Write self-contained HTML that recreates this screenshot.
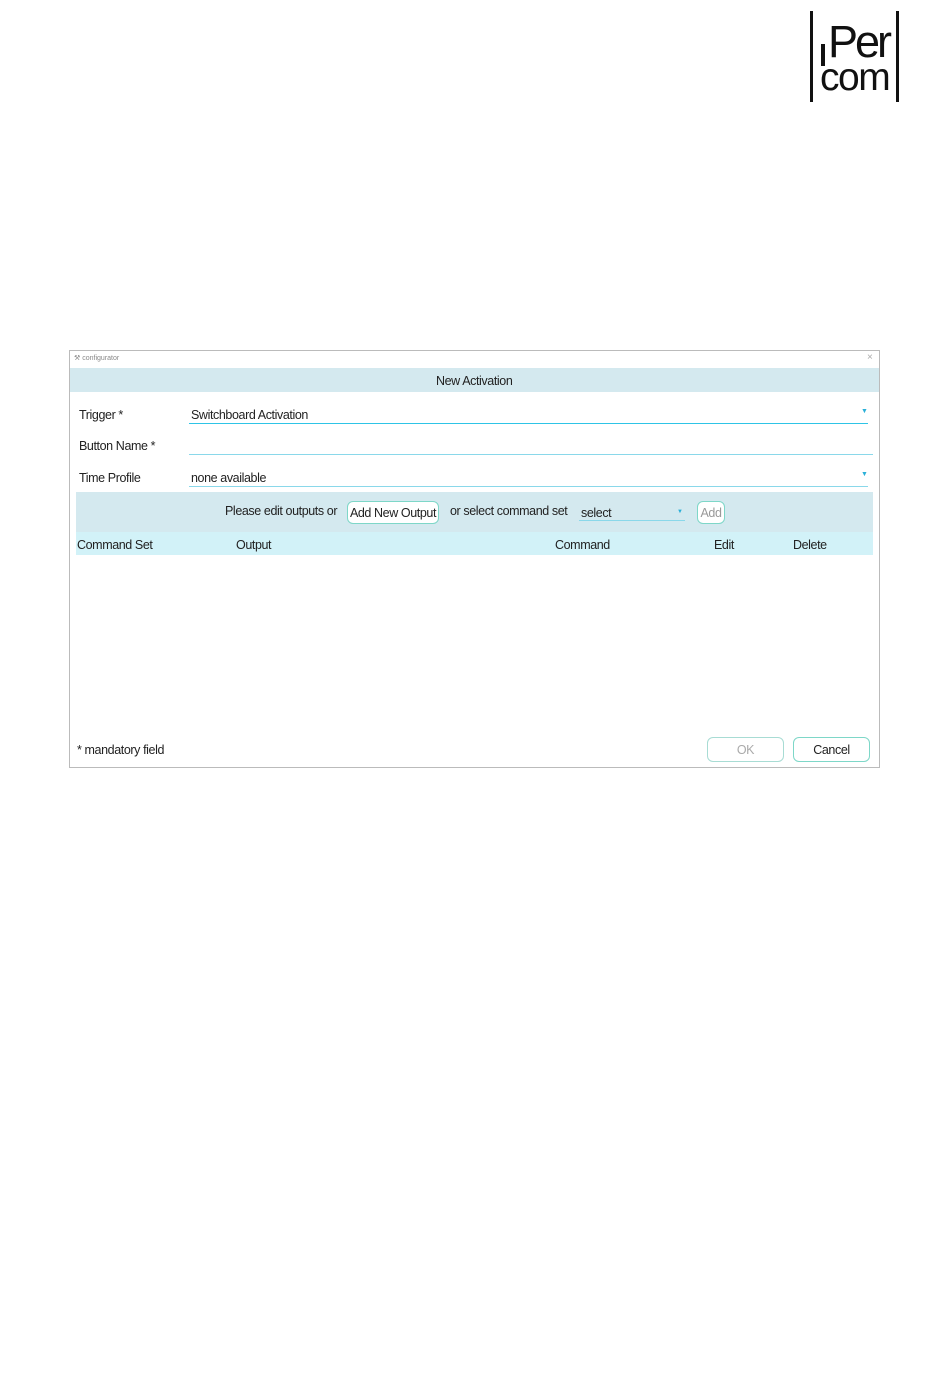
<!DOCTYPE html>
<html><head><style>
body{margin:0;width:950px;height:1397px;background:#fff;position:relative;font-family:"Liberation Sans",sans-serif;overflow:hidden}
.a{position:absolute;white-space:nowrap}
.t{font-size:12.5px;color:#222;letter-spacing:-0.4px}
.line{position:absolute;height:1px}
</style></head><body>
<!-- logo -->
<div class="a" style="left:810px;top:11px;width:3px;height:91px;background:#111"></div>
<div class="a" style="left:896px;top:11px;width:3px;height:91px;background:#111"></div>
<div class="a" style="left:821px;top:44px;width:4px;height:22px;background:#111"></div>
<div class="a" style="left:828px;top:17px;font-size:45px;line-height:50px;color:#111;letter-spacing:-3px">Per</div>
<div class="a" style="left:820px;top:56px;font-size:39px;line-height:44px;color:#111;letter-spacing:-1.5px">com</div>
<!-- dialog -->
<div class="a" style="left:69px;top:350px;width:809px;height:416px;border:1px solid #bbb;background:#fff"></div>
<div class="a" style="left:74px;top:354px;font-size:7px;color:#888">⚒ configurator</div>
<div class="a" style="left:867px;top:352px;font-size:10px;color:#aaa">×</div>
<div class="a" style="left:70px;top:368px;width:809px;height:24px;background:#d4e9ef"></div>
<div class="a t" style="left:436px;top:374px">New Activation</div>
<div class="a t" style="left:79px;top:408px">Trigger *</div>
<div class="a t" style="left:191px;top:408px">Switchboard Activation</div>
<div class="line" style="left:189px;top:423px;width:679px;background:#2ec4e6"></div>
<div class="a" style="left:861px;top:408px;font-size:7px;color:#2ab0d8">▼</div>
<div class="a t" style="left:79px;top:439px">Button Name *</div>
<div class="line" style="left:189px;top:454px;width:684px;background:#8ad8ea"></div>
<div class="a t" style="left:79px;top:471px">Time Profile</div>
<div class="a t" style="left:191px;top:471px">none available</div>
<div class="line" style="left:189px;top:486px;width:679px;background:#8ad8ea"></div>
<div class="a" style="left:861px;top:471px;font-size:7px;color:#2ab0d8">▼</div>
<div class="a" style="left:76px;top:492px;width:797px;height:40px;background:#d4e9ef"></div>
<div class="a t" style="left:225px;top:504px">Please edit outputs or</div>
<div class="a t" style="left:347px;top:501px;width:90px;height:21px;border:1px solid #7ed7c8;border-radius:6px;background:#fff;text-align:center;line-height:22px">Add New Output</div>
<div class="a t" style="left:450px;top:504px">or select command set</div>
<div class="a t" style="left:581px;top:506px">select</div>
<div class="line" style="left:579px;top:520px;width:106px;background:#8ad8ea"></div>
<div class="a" style="left:677px;top:509px;font-size:6px;color:#2ab0d8">▼</div>
<div class="a t" style="left:697px;top:501px;width:26px;height:21px;border:1px solid #7ed7c8;border-radius:6px;background:#fff;text-align:center;line-height:22px;color:#999">Add</div>
<div class="a" style="left:76px;top:532px;width:797px;height:23px;background:#d2f2f8"></div>
<div class="a t" style="left:77px;top:538px">Command Set</div>
<div class="a t" style="left:236px;top:538px">Output</div>
<div class="a t" style="left:555px;top:538px">Command</div>
<div class="a t" style="left:714px;top:538px">Edit</div>
<div class="a t" style="left:793px;top:538px">Delete</div>
<div class="a t" style="left:77px;top:743px">* mandatory field</div>
<div class="a t" style="left:707px;top:737px;width:75px;height:23px;border:1px solid #a8dcd4;border-radius:6px;text-align:center;line-height:25px;color:#aaa">OK</div>
<div class="a t" style="left:793px;top:737px;width:75px;height:23px;border:1px solid #7ed7c8;border-radius:6px;text-align:center;line-height:25px">Cancel</div>
</body></html>
